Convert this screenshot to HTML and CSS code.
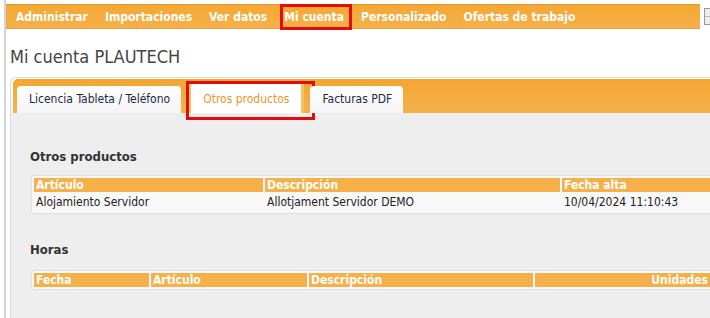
FILE: index.html
```html
<!DOCTYPE html>
<html lang="es">
<head>
    <meta charset="UTF-8">
    <title>Mi cuenta PLAUTECH</title>
    <link rel="stylesheet" href="styles.css">
</head>
<body>

<div class="page">
    <div class="topbar">
        <ul class="menu">
            <li>Administrar</li>
            <li>Importaciones</li>
            <li>Ver datos</li>
            <li class="marked">Mi cuenta</li>
            <li>Personalizado</li>
            <li>Ofertas de trabajo</li>
        </ul>
        <span class="corner-icon"></span>
    </div>

    <h1 class="title">Mi cuenta PLAUTECH</h1>

    <div class="tabs">
        <div class="tab-bar">
            <div class="tab">Licencia Tableta / Teléfono</div>
            <div class="tab active">Otros productos</div>
            <div class="tab">Facturas PDF</div>
        </div>

        <div class="panel">
            <h2>Otros productos</h2>
            <div class="grid-box">
                <table class="grid products">
                    <tr>
                        <th class="c1">Artículo</th>
                        <th class="c2">Descripción</th>
                        <th class="c3">Fecha alta</th>
                    </tr>
                    <tr>
                        <td>Alojamiento Servidor</td>
                        <td>Allotjament Servidor DEMO</td>
                        <td>10/04/2024 11:10:43</td>
                    </tr>
                </table>
            </div>

            <h2 class="hours-title">Horas</h2>
            <div class="grid-box">
                <table class="grid hours">
                    <tr>
                        <th class="h1">Fecha</th>
                        <th class="h2">Artículo</th>
                        <th class="h3">Descripción</th>
                        <th class="h4">Unidades</th>
                    </tr>
                </table>
            </div>
        </div>
    </div>
</div>

</body>
</html>
```

FILE: styles.css
```css
html, body {
    margin: 0;
    padding: 0;
    height: 100%;
    overflow: hidden;
    background: #fff;
}
body {
    font-family: "DejaVu Sans Condensed", "DejaVu Sans", sans-serif;
    font-size: 12px;
    color: #222;
}
.page {
    margin-left: 4px;
    border-left: 2px solid #d4d4d4;
    height: 100%;
    padding-top: 4px;
    box-sizing: border-box;
}
.topbar {
    display: flex;
    align-items: stretch;
    height: 25px;
}
.menu {
    list-style: none;
    margin: 0;
    padding: 0 0 0 4px;
    display: flex;
    flex: 1;
    background: linear-gradient(#f5a733, #f6b04a);
    border-top: 1px solid #e39a2c;
    border-bottom: 1px solid #e8a040;
}
.menu li {
    position: relative;
    color: #fff;
    font-weight: bold;
    line-height: 24px;
    padding: 0 6px;
    margin-right: 5px;
}
.menu li.marked::after {
    content: "";
    position: absolute;
    left: 2px;
    right: -2px;
    top: -1px;
    bottom: -2px;
    border: 3px solid #e10d0d;
}
.corner-icon {
    width: 5px;
    margin: 4px 0 4px 4px;
    border: 1px solid #999;
    border-right: none;
    background: linear-gradient(#eee 45%, #bbb 45%, #bbb 55%, #eee 55%);
}
.title {
    margin: 16px 0 0 4px;
    font-size: 18px;
    font-weight: normal;
    color: #444;
    line-height: 24px;
}
.tabs {
    margin: 8px 0 0 4px;
    border-left: 1px solid #dcdcdc;
    border-top: 1px solid #dcdcdc;
    border-top-left-radius: 6px;
    height: 100%;
}
.tab-bar {
    display: flex;
    align-items: flex-end;
    gap: 6px;
    height: 34px;
    margin: 1px 0 0 2px;
    padding-left: 4px;
    background: linear-gradient(#f4a632, #f5b24c);
    border-top-left-radius: 5px;
}
.tab {
    position: relative;
    height: 27px;
    line-height: 27px;
    padding: 0 11px 0 12px;
    background: linear-gradient(#fff, #f4f4f4);
    border-top-left-radius: 4px;
    border-top-right-radius: 4px;
    color: #1b2a45;
}
.tab.active {
    height: 29px;
    line-height: 31px;
    padding: 0 12px;
    background: #fff;
    color: #e8962a;
    border-left: 3px solid #f3c25e;
    border-right: 3px solid #f3c25e;
    border-radius: 0;
    margin: 0 0 0 1px;
}
.tab.active::after {
    content: "";
    position: absolute;
    left: -5px;
    right: -14px;
    top: -3px;
    bottom: -7px;
    border: 3px solid #e10d0d;
}
.panel {
    background: #eeeeee;
    padding: 36px 0 0 19px;
    height: 100%;
}
.panel h2 {
    margin: 0 0 10px 0;
    font-size: 13px;
    font-weight: bold;
    color: #333;
    line-height: 16px;
}
.panel h2.hours-title {
    margin: 25px 0 12px 0;
}
.grid-box {
    display: inline-block;
    margin-left: 1px;
    padding: 1px 0;
    background: #f8f8f8;
    border: 1px solid #dedede;
    border-radius: 3px;
}
.grid {
    table-layout: fixed;
    border-collapse: separate;
    border-spacing: 2px 1px;
    font-size: 12px;
}
.products { width: 795px; }
.hours { width: 680px; }
.grid th {
    background: #f5b04a;
    color: #fff;
    font-weight: bold;
    text-align: left;
    padding: 0 2px;
    height: 14px;
    line-height: 14px;
    white-space: nowrap;
    overflow: hidden;
}
.grid td {
    padding: 0 2px;
    height: 18px;
    line-height: 18px;
    color: #222;
    white-space: nowrap;
}
.products .c1 { width: 225px; }
.products .c2 { width: 291px; }
.products .c3 { width: 259px; }
.hours .h1 { width: 111px; }
.hours .h2 { width: 152px; }
.hours .h3 { width: 220px; }
.hours .h4 { width: 171px; text-align: right; }
```
